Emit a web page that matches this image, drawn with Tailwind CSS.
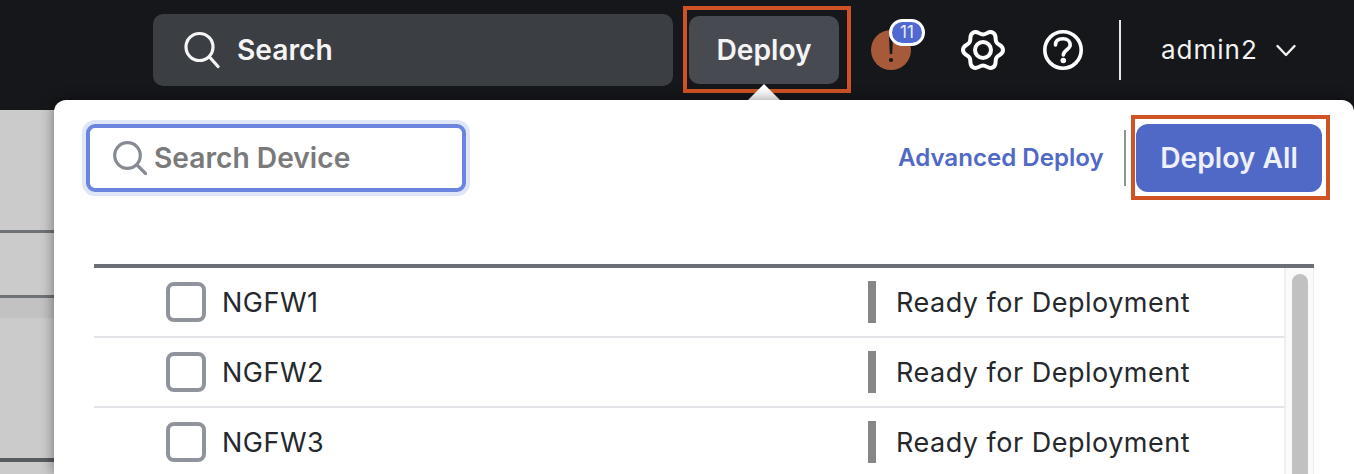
<!doctype html>
<html>
<head>
<meta charset="utf-8">
<script src="https://cdn.jsdelivr.net/npm/@tailwindcss/browser@4"></script>
</head>
<body class="w-[1354px] h-[474px] overflow-hidden bg-[#cbcbcb] font-['Inter','Liberation_Sans',sans-serif]">
<div class="relative w-[1354px] h-[474px] overflow-hidden">
  <!-- top bar -->
  <header class="relative h-[110px] bg-[#15171a] pl-[153px] pb-[10px] flex items-center text-white">
    <div class="w-[520px] h-[72px] rounded-[10px] bg-[#3b3e43] flex items-center pl-[31px] gap-[17px]">
      <svg class="w-[36px] h-[38px]" viewBox="0 0 36 38" fill="none" stroke="#f5f5f5" stroke-width="3.2" stroke-linecap="round"><circle cx="15.5" cy="16" r="13.5"/><path d="M25.5 26 L34 35.5"/></svg>
      <span class="text-[28.2px] font-semibold leading-none text-[#f4f4f4]">Search</span>
    </div>
    <div class="ml-[16px] relative w-[150px] h-[68px] rounded-[10px] bg-[#484a52] flex items-center justify-center">
      <span class="text-[28.2px] font-semibold leading-none text-[#f4f4f4]">Deploy</span>
      <div class="absolute left-[-6px] top-[-10px] w-[168px] h-[87px] border-[4px] border-[#cf5325]"></div>
      <div class="absolute left-[59px] top-[68px] w-0 h-0 border-l-[16px] border-r-[16px] border-b-[16px] border-l-transparent border-r-transparent border-b-white"></div>
    </div>
    <div class="ml-[32px] relative w-[40px] h-[40px] rounded-full bg-[#a65a3a] flex items-center justify-center">
      <svg class="w-[6px] h-[30px] relative top-[-1px]" viewBox="0 0 6 30" fill="#15171a"><path d="M1 3h4l-.8 17h-2.4z"/><circle cx="3" cy="26" r="2.1"/></svg>
      <div class="absolute left-[18px] top-[-11px] w-[36px] h-[27px] rounded-full border-[3px] border-white bg-[#5069d0] flex items-center justify-center text-[17px] leading-none text-[#e8ecfa]">11</div>
    </div>
    <svg class="ml-[50px] w-[44px] h-[42px]" viewBox="0 0 44 42" fill="none" stroke="#fff" stroke-width="4" stroke-linejoin="round"><circle cx="22" cy="21" r="8"/><path d="M42 21 C42 16 37.42 16.71 35.42 13.25 C33.42 9.79 36.33 6.18 32 3.68 C27.67 1.18 26 5.5 22 5.5 C18 5.5 16.33 1.18 12 3.68 C7.67 6.18 10.58 9.79 8.58 13.25 C6.58 16.71 2 16 2 21 C2 26 6.58 25.29 8.58 28.75 C10.58 32.21 7.67 35.82 12 38.32 C16.33 40.82 18 36.5 22 36.5 C26 36.5 27.67 40.82 32 38.32 C36.33 35.82 33.42 32.21 35.42 28.75 C37.42 25.29 42 26 42 21 Z"/></svg>
    <svg class="ml-[38px] w-[40px] h-[40px]" viewBox="0 0 40 40" fill="none" stroke="#fff" stroke-width="3.6" stroke-linecap="round"><circle cx="20" cy="20" r="18.2"/><path d="M12.5 15 C12.5 10.5 16 8.8 20 8.8 C24.5 8.8 27.2 11.5 27.2 15 C27.2 19.5 20.3 20 20.3 25"/><circle cx="20.3" cy="30.5" r="2.8" fill="#fff" stroke="none"/></svg>
    <div class="ml-[36px] w-[2px] h-[60px] bg-[#e6e6e6]"></div>
    <span class="ml-[40px] text-[26px] leading-none tracking-[1px] text-[#f2f2f2]">admin2</span>
    <svg class="ml-[18px] w-[20px] h-[13px]" viewBox="0 0 20 13" fill="none" stroke="#f2f2f2" stroke-width="2.4" stroke-linecap="round" stroke-linejoin="round"><path d="M1.5 2 L10 11 L18.5 2"/></svg>
  </header>

  <!-- dimmed page behind the panel -->
  <div class="bg-[#cbcbcb]">
    <div class="h-[120px]"></div>
    <div class="h-[3px] bg-[#6f7277]"></div>
    <div class="h-[62px]"></div>
    <div class="h-[3px] bg-[#6f7277]"></div>
    <div class="h-[20px] bg-[#c2c2c2]"></div>
    <div class="h-[140px]"></div>
    <div class="h-[4px] bg-[#585b60]"></div>
  </div>

  <!-- deploy panel -->
  <section class="absolute left-[54px] top-[100px] w-[1300px] h-[374px] bg-white rounded-t-[12px] shadow-[0_0_14px_rgba(0,0,0,0.45)] pl-[32px] pr-[32px] pt-[24px]">
    <div class="flex items-start h-[68px]">
      <div class="w-[380px] h-[68px] rounded-[9px] border-[4px] border-[#6b84dd] shadow-[0_0_0_4px_#dfe6f7] flex items-center pl-[23px] gap-[7px]">
        <svg class="w-[34px] h-[34px] shrink-0" viewBox="0 0 34 34" fill="none" stroke="#868b93" stroke-width="3.2" stroke-linecap="round"><circle cx="14.5" cy="14.5" r="12.8"/><path d="M24 24 L32.5 32.5"/></svg>
        <span class="text-[28.2px] font-semibold leading-none text-[#7a7a7a]">Search Device</span>
      </div>
      <div class="ml-[432px] h-[68px] flex items-center w-[205px]">
        <span class="text-[24.1px] font-semibold leading-none text-[#5069c7] whitespace-nowrap">Advanced Deploy</span>
      </div>
      <div class="ml-[21px] mt-[6px] w-[2px] h-[56px] bg-[#8f9299]"></div>
      <div class="relative ml-[10px] w-[186px] h-[68px] rounded-[12px] bg-[#5069c6] flex items-center justify-center">
        <span class="text-[28.2px] font-semibold leading-none text-[#eef0fa] whitespace-nowrap">Deploy All</span>
        <div class="absolute left-[-5px] top-[-9px] w-[199px] h-[85px] border-[4px] border-[#cf5325]"></div>
      </div>
    </div>

    <div class="mt-[72px] w-[1220px] ml-[8px] border-t-[4px] border-[#6b6e76] flex">
      <div class="w-[1190px]">
        <div class="h-[70px] border-b-[2px] border-[#e4e4e8] flex items-center">
          <div class="ml-[72px] w-[40px] h-[40px] rounded-[8px] border-[4px] border-[#8e939c]"></div>
          <span class="ml-[16px] w-[646px] text-[27px] leading-none tracking-[0.5px] text-[#25282d]">NGFW1</span>
          <div class="w-[8px] h-[42px] bg-[#868686]"></div>
          <span class="ml-[20px] text-[27px] leading-none tracking-[0.5px] text-[#25282d]">Ready for Deployment</span>
        </div>
        <div class="h-[70px] border-b-[2px] border-[#e4e4e8] flex items-center">
          <div class="ml-[72px] w-[40px] h-[40px] rounded-[8px] border-[4px] border-[#8e939c]"></div>
          <span class="ml-[16px] w-[646px] text-[27px] leading-none tracking-[0.5px] text-[#25282d]">NGFW2</span>
          <div class="w-[8px] h-[42px] bg-[#868686]"></div>
          <span class="ml-[20px] text-[27px] leading-none tracking-[0.5px] text-[#25282d]">Ready for Deployment</span>
        </div>
        <div class="h-[70px] border-b-[2px] border-transparent flex items-center">
          <div class="ml-[72px] w-[40px] h-[40px] rounded-[8px] border-[4px] border-[#8e939c]"></div>
          <span class="ml-[16px] w-[646px] text-[27px] leading-none tracking-[0.5px] text-[#25282d]">NGFW3</span>
          <div class="w-[8px] h-[42px] bg-[#868686]"></div>
          <span class="ml-[20px] text-[27px] leading-none tracking-[0.5px] text-[#25282d]">Ready for Deployment</span>
        </div>
      </div>
      <div class="w-[30px] h-[206px] bg-[#fafafa] border-l-[2px] border-r-[1px] border-[#eeeeee] pl-[6px] pt-[6px]">
        <div class="w-[16px] h-[300px] rounded-t-[8px] bg-[#c1c1c1]"></div>
      </div>
    </div>
  </section>
</div>
</body>
</html>
